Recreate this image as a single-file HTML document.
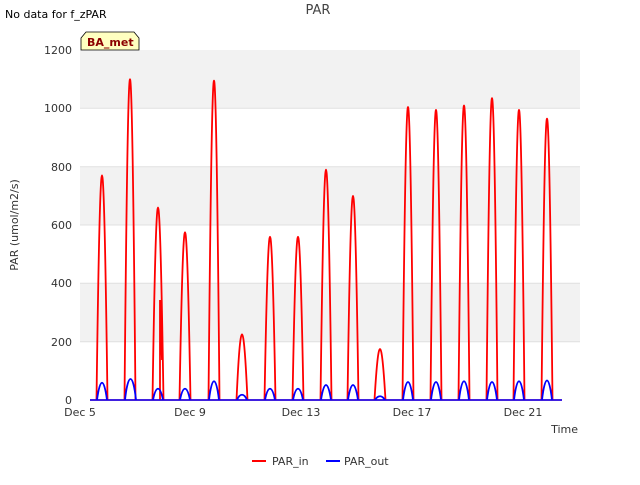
<!DOCTYPE html>
<html><head><meta charset="utf-8"><style>
body{margin:0;background:#fff;width:640px;height:480px;overflow:hidden;font-family:"Liberation Sans","DejaVu Sans",sans-serif;}
</style></head><body>
<svg width="640" height="480" viewBox="0 0 640 480" xmlns="http://www.w3.org/2000/svg" font-family="DejaVu Sans, Liberation Sans, sans-serif">
<rect x="80" y="50" width="500" height="350" fill="#fff"/>
<rect x="80" y="50" width="500" height="58.3" fill="#f2f2f2"/>
<rect x="80" y="166.7" width="500" height="58.3" fill="#f2f2f2"/>
<rect x="80" y="283.3" width="500" height="58.3" fill="#f2f2f2"/>
<g stroke="#e0e0e0" stroke-width="1">
<line x1="80" x2="580" y1="108.3" y2="108.3"/><line x1="80" x2="580" y1="166.7" y2="166.7"/><line x1="80" x2="580" y1="225" y2="225"/><line x1="80" x2="580" y1="283.3" y2="283.3"/><line x1="80" x2="580" y1="341.7" y2="341.7"/>
</g>
<g fill="#333" font-size="11" text-anchor="end">
<text x="72" y="54">1200</text><text x="72" y="112">1000</text><text x="72" y="171">800</text><text x="72" y="229">600</text><text x="72" y="287">400</text><text x="72" y="346">200</text><text x="72" y="404">0</text>
</g>
<g fill="#333" font-size="11" text-anchor="middle">
<text x="80" y="416">Dec 5</text><text x="190" y="416">Dec 9</text><text x="301" y="416">Dec 13</text><text x="412" y="416">Dec 17</text><text x="523" y="416">Dec 21</text>
</g>
<text x="578" y="433" font-size="11" fill="#333" text-anchor="end">Time</text>
<text x="18" y="225" font-size="11" fill="#333" text-anchor="middle" transform="rotate(-90 18 225)">PAR (umol/m2/s)</text>
<text x="318" y="14" font-size="13" fill="#444" text-anchor="middle">PAR</text>
<text x="5" y="18" font-size="11" fill="#000">No data for f_zPAR</text>
<path d="M81,50 L81,38 L86,32 L134,32 L139,38 L139,50 Z" fill="#ffffc0" stroke="#000" stroke-width="0.8"/>
<text x="87" y="46" font-size="11" font-weight="bold" fill="#8b0000">BA_met</text>
<line x1="90" x2="562" y1="400" y2="400" stroke="#ff0000" stroke-width="1.6"/>
<path fill="none" stroke="#ff0000" stroke-width="1.8" d="
M96.5,400 C100.5,100.6 103.5,100.6 107.5,400
M124.5,400 C128.5,-27.7 131.5,-27.7 135.5,400
M152.5,400 C156.5,143.4 159.5,143.4 163.5,400
M179.5,400 C183.5,176.4 186.5,176.4 190.5,400
M208.5,400 C212.5,-25.8 215.5,-25.8 219.5,400
M236.5,400 C240.5,312.5 243.5,312.5 247.5,400
M264.5,400 C268.5,182.3 271.5,182.3 275.5,400
M292.5,400 C296.5,182.3 299.5,182.3 303.5,400
M320.5,400 C324.5,92.8 327.5,92.8 331.5,400
M347.5,400 C351.5,127.8 354.5,127.8 358.5,400
M374.5,400 C378.5,332 381.5,332 385.5,400
M402.5,400 C406.5,9.3 409.5,9.3 413.5,400
M430.5,400 C434.5,13.2 437.5,13.2 441.5,400
M458.5,400 C462.5,7.3 465.5,7.3 469.5,400
M486.5,400 C490.5,-2.4 493.5,-2.4 497.5,400
M513.5,400 C517.5,13.2 520.5,13.2 524.5,400
M541.5,400 C545.5,24.8 548.5,24.8 552.5,400
M160,400 L160,300 L162,360"/>
<line x1="90" x2="562" y1="400" y2="400" stroke="#0000ff" stroke-width="1.6"/>
<path fill="none" stroke="#0000ff" stroke-width="1.8" d="
M97,400 C100,377 104,377 107,400
M125,400 C128,372 133,372 136,400
M153,400 C156,385 160,385 163,400
M180,400 C183,385 187,385 190,400
M209,400 C212,375 216,375 219,400
M237,400 C240,393 244,393 247,400
M265,400 C268,385 272,385 275,400
M293,400 C296,385 300,385 303,400
M321,400 C324,380 328,380 331,400
M348,400 C351,380 355,380 358,400
M375,400 C378,395 382,395 385,400
M403,400 C406,376 410,376 413,400
M431,400 C434,376 438,376 441,400
M459,400 C462,375 466,375 469,400
M487,400 C490,376 494,376 497,400
M514,400 C517,375 521,375 524,400
M542,400 C545,374 549,374 552,400"/>
<line x1="252" x2="266" y1="461" y2="461" stroke="#ff0000" stroke-width="2"/>
<text x="272" y="465" font-size="11" fill="#333">PAR_in</text>
<line x1="326" x2="340" y1="461" y2="461" stroke="#0000ff" stroke-width="2"/>
<text x="344" y="465" font-size="11" fill="#333">PAR_out</text>
</svg>
</body></html>
